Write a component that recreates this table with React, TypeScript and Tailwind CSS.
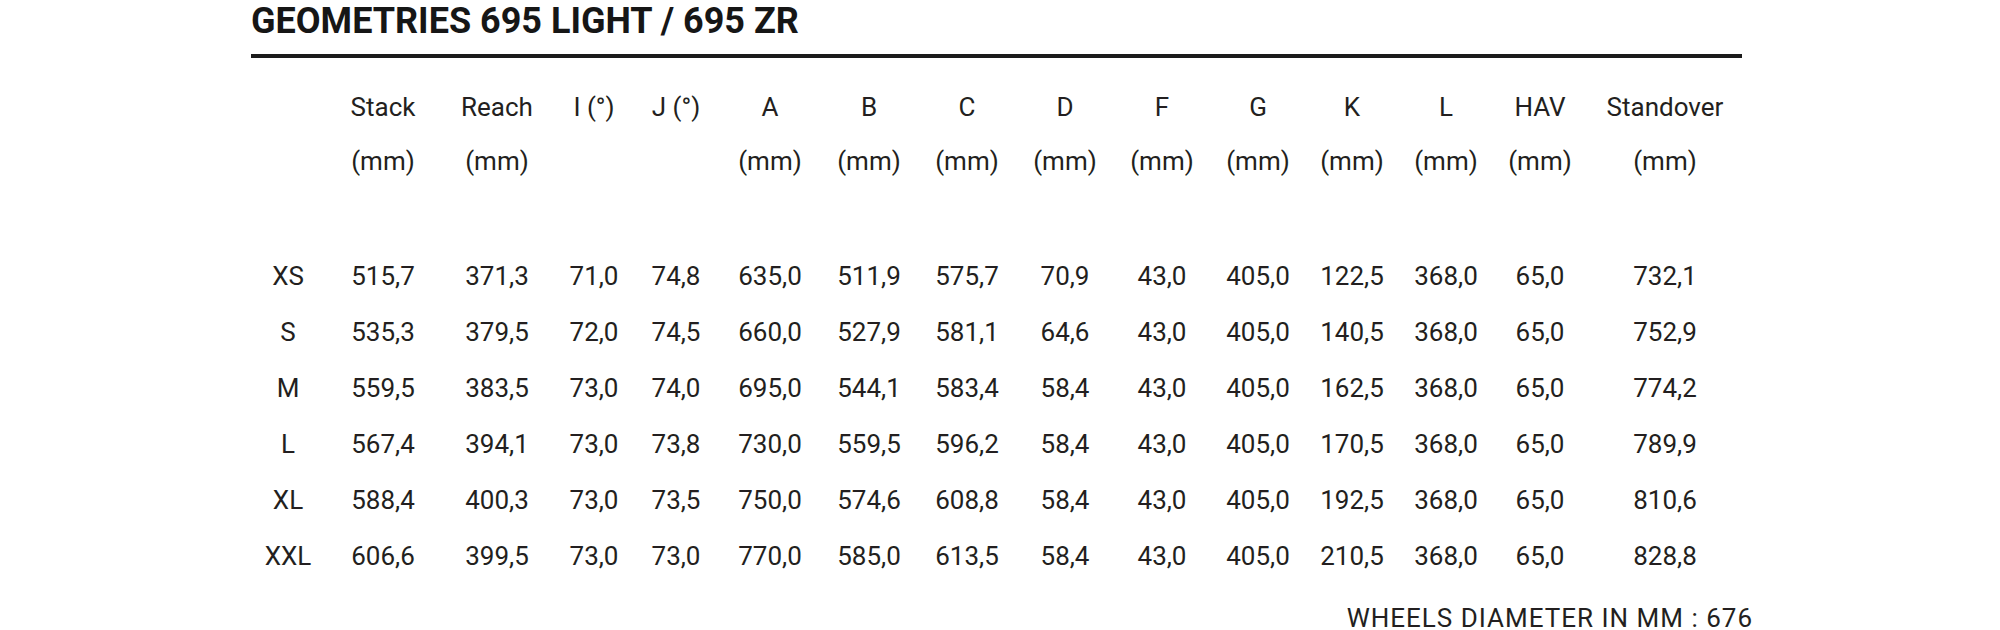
const heads = [
  ["", ""],
  ["Stack", "(mm)"],
  ["Reach", "(mm)"],
  ["I (°)", ""],
  ["J (°)", ""],
  ["A", "(mm)"],
  ["B", "(mm)"],
  ["C", "(mm)"],
  ["D", "(mm)"],
  ["F", "(mm)"],
  ["G", "(mm)"],
  ["K", "(mm)"],
  ["L", "(mm)"],
  ["HAV", "(mm)"],
  ["Standover", "(mm)"],
];

const rows = [
  ["XS", "515,7", "371,3", "71,0", "74,8", "635,0", "511,9", "575,7", "70,9", "43,0", "405,0", "122,5", "368,0", "65,0", "732,1"],
  ["S", "535,3", "379,5", "72,0", "74,5", "660,0", "527,9", "581,1", "64,6", "43,0", "405,0", "140,5", "368,0", "65,0", "752,9"],
  ["M", "559,5", "383,5", "73,0", "74,0", "695,0", "544,1", "583,4", "58,4", "43,0", "405,0", "162,5", "368,0", "65,0", "774,2"],
  ["L", "567,4", "394,1", "73,0", "73,8", "730,0", "559,5", "596,2", "58,4", "43,0", "405,0", "170,5", "368,0", "65,0", "789,9"],
  ["XL", "588,4", "400,3", "73,0", "73,5", "750,0", "574,6", "608,8", "58,4", "43,0", "405,0", "192,5", "368,0", "65,0", "810,6"],
  ["XXL", "606,6", "399,5", "73,0", "73,0", "770,0", "585,0", "613,5", "58,4", "43,0", "405,0", "210,5", "368,0", "65,0", "828,8"],
];

const cols =
  "grid grid-cols-[74px_116px_112px_82px_82px_106px_92px_104px_92px_102px_90px_98px_90px_98px_152px]";

export default function App() {
  return (
    <div className="w-[2000px] h-[630px] bg-white font-['Roboto',sans-serif] text-[#231f20]">
      <div className="ml-[251px] w-[1491px]">
        <h1 className="-mt-[1px] text-[36px] leading-[44px] font-bold text-[#161616] whitespace-nowrap">
          GEOMETRIES 695 LIGHT / 695 ZR
        </h1>
        <div className="mt-[11px] h-[4px] bg-[#1b1b1b]" />

        <div className="mt-[22px] text-[26px]">
          <div className={cols + " h-[54px] leading-[54px]"}>
            {heads.map((h, i) => (
              <div key={i} className="text-center whitespace-nowrap">
                {h[0]}
              </div>
            ))}
          </div>
          <div className={cols + " h-[54px] leading-[54px]"}>
            {heads.map((h, i) => (
              <div key={i} className="text-center whitespace-nowrap">
                {h[1]}
              </div>
            ))}
          </div>

          <div className="mt-[60px]">
            {rows.map((r) => (
              <div key={r[0]} className={cols + " h-[56px] leading-[56px]"}>
                {r.map((v, i) => (
                  <div key={i} className="text-center whitespace-nowrap">
                    {v}
                  </div>
                ))}
              </div>
            ))}
          </div>

          <div className="flex justify-end -mr-[11px] mt-[23px] leading-[22px] tracking-[1px]">
            WHEELS DIAMETER IN MM : 676
          </div>
        </div>
      </div>
    </div>
  );
}
